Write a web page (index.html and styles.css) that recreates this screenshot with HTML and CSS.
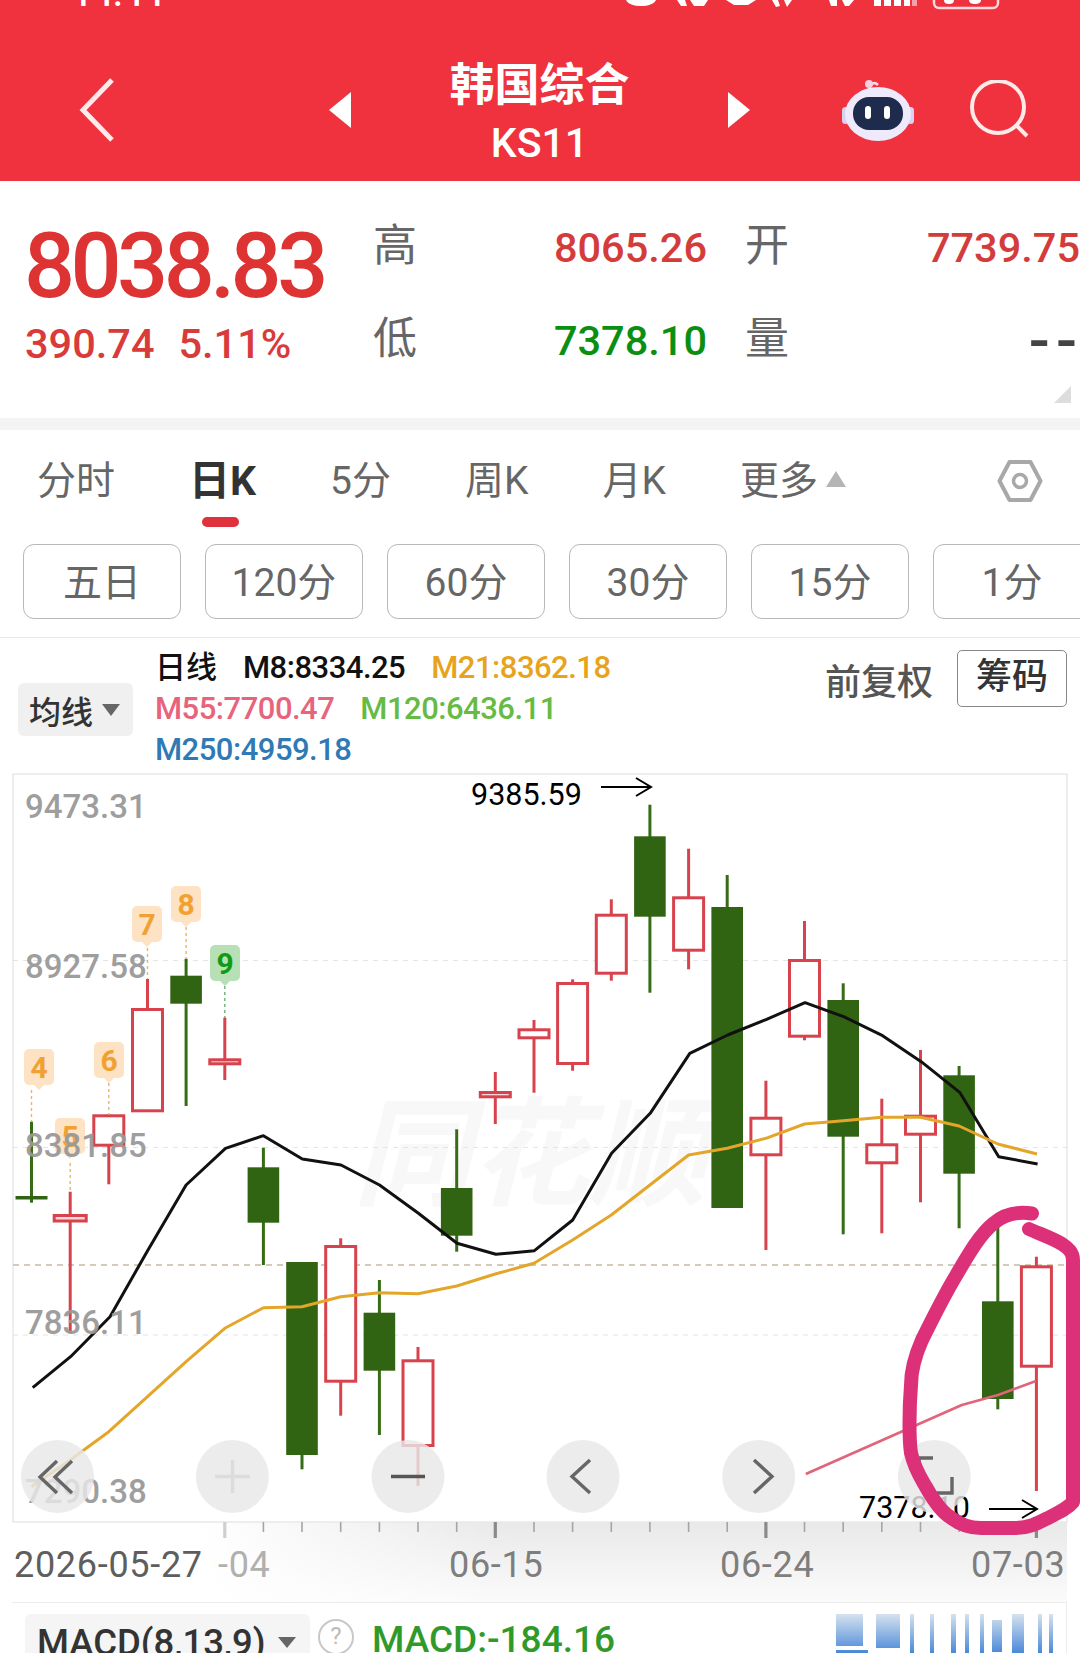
FILE: index.html
```html
<!DOCTYPE html>
<html lang="zh-CN">
<head>
    <meta charset="UTF-8">
    <meta name="viewport" content="width=device-width, initial-scale=1.0">
    <title>韩国综合 KS11</title>
    <link rel="stylesheet" href="styles.css">
</head>
<body>
    <header class="header">
        <div class="status">
            <span class="status-time">14:44</span>
            <svg class="status-icons" width="390" height="10" viewBox="0 0 390 10">
                <path d="M2 0h30c-2 4-8 6-15 6S4 4 2 0z" fill="#fff"/>
                <path d="M53 0h8l2 6h-6zM66 0h18l-4 6h-10z" fill="#fff"/>
                <path d="M102 0h30l-8 5h-14z" fill="#fff"/>
                <path d="M148 0h6l2 6-4 1zM160 0h8l-5 7z" fill="#fff"/>
                <path d="M205 0h8v6h-6zM218 0h12l-5 6h-4z" fill="#fff"/>
                <path d="M250 0h7v6h-7zM260 0h7v6h-7zM270 0h7v6h-7zM280 0h6v6h-6z" fill="#fff"/>
                <path d="M288 0h5v6h-5z" fill="#f5a0a6"/>
                <path d="M310 0v3a5 5 0 0 0 5 5h54a5 5 0 0 0 5-5V0" fill="none" stroke="#ffd9dc" stroke-width="2.5"/>
                <path d="M320 0h10c0 3-2 4-5 4s-5-1-5-4zM345 0h12c0 3-3 4-6 4s-6-1-6-4z" fill="#fff"/>
            </svg>
        </div>
        <div class="nav">
            <svg class="back" width="36" height="64" viewBox="0 0 36 64"><path d="M33 2L4 32l29 30" fill="none" stroke="#ffe9ea" stroke-width="5"/></svg>
            <span class="arrow arrow-left"></span>
            <div class="nav-title">
                <div class="name">韩国综合</div>
                <div class="code">KS11</div>
            </div>
            <span class="arrow arrow-right"></span>
            <svg class="robot" width="72" height="66" viewBox="0 0 72 66">
                <path d="M27 13c1-6 5-9 9-5" fill="none" stroke="#f4d9e6" stroke-width="2.5"/>
                <circle cx="27" cy="7" r="4" fill="#f7cfe0"/>
                <rect x="0" y="30" width="7" height="17" rx="3.5" fill="#d6d3f2"/>
                <rect x="65" y="30" width="7" height="17" rx="3.5" fill="#d6d3f2"/>
                <ellipse cx="36" cy="37" rx="33" ry="27" fill="#eeeafc"/>
                <rect x="11" y="20" width="50" height="33" rx="16" fill="#1f2b4d"/>
                <rect x="23" y="29" width="6" height="13" rx="3" fill="#fff"/>
                <rect x="42" y="29" width="6" height="13" rx="3" fill="#fff"/>
            </svg>
            <svg class="search" width="60" height="60" viewBox="0 0 60 60">
                <circle cx="28" cy="27" r="26" fill="none" stroke="#ffeaea" stroke-width="4"/>
                <path d="M46 45l11 11" stroke="#ffeaea" stroke-width="4"/>
            </svg>
        </div>
    </header>

    <section class="quote">
        <div class="quote-main">
            <div class="price">8038.83</div>
            <div class="change"><span>390.74</span><span>5.11%</span></div>
        </div>
        <div class="q-label">高</div>
        <div class="q-value up">8065.26</div>
        <div class="q-label q-label-wide">开</div>
        <div class="q-value up">7739.75</div>
        <div class="q-label">低</div>
        <div class="q-value down">7378.10</div>
        <div class="q-label q-label-wide">量</div>
        <div class="q-value dash">--</div>
        <span class="corner"></span>
    </section>

    <nav class="tabs">
        <span class="tab">分时</span>
        <span class="tab active">日K</span>
        <span class="tab">5分</span>
        <span class="tab">周K</span>
        <span class="tab">月K</span>
        <span class="tab">更多<i class="more-tri"></i></span>
        <svg class="hex" width="46" height="44" viewBox="0 0 46 44">
            <path d="M12.5 3h21l10 19-10 19h-21L2.500 22z" fill="none" stroke="#a8a8a8" stroke-width="4" stroke-linejoin="round"/>
            <circle cx="23" cy="22" r="6.500" fill="none" stroke="#a8a8a8" stroke-width="3.500"/>
        </svg>
    </nav>

    <div class="periods">
        <button class="period">五日</button>
        <button class="period">120分</button>
        <button class="period">60分</button>
        <button class="period">30分</button>
        <button class="period">15分</button>
        <button class="period">1分</button>
    </div>

    <section class="indicators">
        <div class="ma-pill">均线<i class="pill-tri"></i></div>
        <div class="ma-lines">
            <div class="ma-row"><span class="ma-title">日线</span><span>M8:8334.25</span><span class="m21">M21:8362.18</span></div>
            <div class="ma-row"><span class="m55">M55:7700.47</span><span class="m120">M120:6436.11</span></div>
            <div class="ma-row"><span class="m250">M250:4959.18</span></div>
        </div>
        <div class="ma-right">
            <span class="adjust">前复权</span>
            <span class="chips">筹码</span>
        </div>
    </section>

    <svg class="chart" width="1080" height="832" viewBox="0 770 1080 832">
        <defs>
            <linearGradient id="axisFade" x1="0" y1="0" x2="0" y2="1">
                <stop offset="0" stop-color="#e9e9e9"/>
                <stop offset="1" stop-color="#fbfbfb"/>
            </linearGradient>
            <linearGradient id="axisLeft" x1="0" y1="0" x2="1" y2="0">
                <stop offset="0" stop-color="#fff"/>
                <stop offset="1" stop-color="#fff" stop-opacity="0"/>
            </linearGradient>
            <path id="badge" d="M-10 -20h20a5 5 0 0 1 5 5v26a5 5 0 0 1 -5 5h-5l-5 5-5-5h-5a5 5 0 0 1 -5-5v-26a5 5 0 0 1 5-5z"/>
        </defs>

        <!-- axis strip and frame -->
        <rect x="200" y="1522" width="867" height="80" fill="url(#axisFade)"/>
        <rect x="200" y="1522" width="300" height="80" fill="url(#axisLeft)"/>
        <rect x="13" y="774" width="1054" height="748" class="frame"/>

        <text x="530" y="1196" class="watermark">同花顺</text>

        <path d="M13 960.5H1067M13 1147.5H1067M13 1335H1067" class="grid"/>
        <path d="M13 1265H1067" class="grid-last"/>

        <!-- candles -->
        <path d="M31.5 1121.7V1202.7" class="wick g"/><rect x="15.5" y="1196" width="32" height="3.5" class="solid"/>
        <path d="M70.2 1191.7V1333.3" class="wick r"/><rect x="54.2" y="1215.5" width="32" height="5.5" class="hollow thin"/>
        <path d="M108.8 1114V1184.3" class="wick r"/><rect x="93.8" y="1115.8" width="30" height="29.4" class="hollow"/>
        <path d="M147.5 979V1008" class="wick r"/><rect x="132.5" y="1009.5" width="30" height="101.3" class="hollow"/>
        <path d="M186.1 958.7V1106" class="wick g"/><rect x="170.3" y="975.7" width="31.6" height="28" class="solid"/>
        <path d="M224.8 1017.7V1080" class="wick r"/><rect x="209.8" y="1059.8" width="30" height="4" class="hollow thin"/>
        <path d="M263.4 1147.7V1265" class="wick g"/><rect x="247.6" y="1167.3" width="31.6" height="55.4" class="solid"/>
        <path d="M302 1455V1469.3" class="wick g"/><rect x="286.2" y="1262" width="31.6" height="193" class="solid"/>
        <path d="M340.7 1238.3V1415.7" class="wick r"/><rect x="325.7" y="1246.5" width="30" height="134.7" class="hollow"/>
        <path d="M379.4 1280V1435" class="wick g"/><rect x="363.6" y="1312.7" width="31.6" height="58" class="solid"/>
        <path d="M418 1347V1486" class="wick r"/><rect x="403" y="1360.8" width="30" height="84.7" class="hollow"/>
        <path d="M456.7 1129.3V1251.7" class="wick g"/><rect x="440.9" y="1188" width="31.6" height="47.7" class="solid"/>
        <path d="M495.3 1072V1124" class="wick r"/><rect x="480.3" y="1092.5" width="30" height="4.3" class="hollow thin"/>
        <path d="M534 1020V1092.7" class="wick r"/><rect x="519" y="1029.8" width="30" height="8" class="hollow"/>
        <path d="M572.6 979.3V1070.7" class="wick r"/><rect x="557.6" y="983.5" width="30" height="80" class="hollow"/>
        <path d="M611.3 899.3V980.7" class="wick r"/><rect x="596.3" y="915.2" width="30" height="58" class="hollow"/>
        <path d="M649.9 804.7V992.7" class="wick g"/><rect x="634.1" y="836.3" width="31.6" height="80.4" class="solid"/>
        <path d="M688.6 848.7V969.3" class="wick r"/><rect x="673.6" y="897.8" width="30" height="52.4" class="hollow"/>
        <path d="M727.2 875V907" class="wick g"/><rect x="711.4" y="907" width="31.6" height="301" class="solid"/>
        <path d="M765.9 1080.7V1250" class="wick r"/><rect x="750.9" y="1118.2" width="30" height="36.6" class="hollow"/>
        <path d="M804.5 921V1040.3" class="wick r"/><rect x="789.5" y="960.5" width="30" height="75.7" class="hollow"/>
        <path d="M843.2 983.3V1234.3" class="wick g"/><rect x="827.4" y="1000" width="31.6" height="136.7" class="solid"/>
        <path d="M881.8 1098.7V1233.3" class="wick r"/><rect x="866.8" y="1144.8" width="30" height="18" class="hollow"/>
        <path d="M920.5 1050V1202.3" class="wick r"/><rect x="905.5" y="1116.2" width="30" height="18" class="hollow"/>
        <path d="M959.1 1066V1228.3" class="wick g"/><rect x="943.3" y="1075.3" width="31.6" height="98.4" class="solid"/>
        <path d="M997.8 1225V1409.3" class="wick g"/><rect x="982" y="1301.3" width="31.6" height="97.7" class="solid"/>
        <path d="M1036.4 1256.7V1491" class="wick r"/><rect x="1021.4" y="1266.8" width="30" height="99.4" class="hollow"/>

        <!-- moving averages -->
        <polyline class="line m8" points="32.7,1387.7 70.6,1356.7 110,1316.7 148,1250 186.1,1185 225.5,1148.3 263.4,1135.7 302.3,1159 341,1165 379.5,1185 418.4,1213.3 457,1243.3 495.9,1254.3 534.4,1250.7 572.7,1220 611.6,1153.3 650.2,1113.3 689.8,1053.3 727.7,1035 766.6,1019.3 805,1002.7 843.7,1016.7 882.6,1035.7 921.2,1061.7 960,1092.7 998.7,1156.7 1037.6,1164"/>
        <polyline class="line m21l" points="31.5,1486.7 70.2,1460 108.8,1431.7 147.5,1396.7 186.1,1361.7 224.8,1328.3 263.4,1307.7 302,1306.7 340.7,1296.7 379.4,1292.7 418,1293.7 456.7,1286 495.3,1274 534,1263.3 572.6,1240 611.3,1215 649.9,1185 688.6,1155 727.2,1148.3 765.9,1138.3 804.5,1124 843.2,1120.7 881.8,1117.3 920.5,1117.3 959.1,1126 997.8,1144 1037,1154"/>
        <polyline class="line m55l" points="805.8,1474 961.8,1405 998,1395 1035.9,1381"/>

        <!-- magic nine marks -->
        <path d="M31.5 1090V1122M70.2 1163V1192M108.8 1083V1115M147.5 948V979M186.1 927V959" class="mark-link"/>
        <path d="M224.8 986V1018" class="mark-link mark-link-green"/>
        <g class="mark"><use href="#badge" x="39" y="1069"/><text x="39" y="1078">4</text></g>
        <g class="mark"><use href="#badge" x="70" y="1138"/><text x="70" y="1147">5</text></g>
        <g class="mark"><use href="#badge" x="109" y="1062"/><text x="109" y="1071">6</text></g>
        <g class="mark"><use href="#badge" x="147" y="926"/><text x="147" y="935">7</text></g>
        <g class="mark"><use href="#badge" x="186" y="906"/><text x="186" y="915">8</text></g>
        <g class="mark mark-green"><use href="#badge" x="225" y="965"/><text x="225" y="974">9</text></g>

        <!-- price axis -->
        <text x="25" y="818" class="axis">9473.31</text>
        <text x="25" y="978" class="axis">8927.58</text>
        <text x="25" y="1157" class="axis">8381.85</text>
        <text x="25" y="1334" class="axis">7836.11</text>
        <text x="25" y="1503" class="axis">7290.38</text>

        <!-- high / low labels -->
        <text x="471" y="805" class="extreme">9385.59</text>
        <path d="M601 787H650M636 778l15 9-15 9" class="extreme-arrow"/>
        <text x="859" y="1518" class="extreme">7378.10</text>
        <path d="M989 1509H1037M1022 1500l15 9-15 9" class="extreme-arrow"/>

        <!-- date axis -->
        <path d="M263.4 1522v10M302 1522v10M340.7 1522v10M379.4 1522v10M418 1522v10M456.7 1522v10M534 1522v10M572.6 1522v10M611.3 1522v10M649.9 1522v10M688.6 1522v10M727.2 1522v10M804.5 1522v10M843.2 1522v10M881.8 1522v10M920.5 1522v10M959.1 1522v10" class="tick"/>
        <path d="M224.8 1522v16" class="tick-big tick-faint"/>
        <path d="M495.3 1522v16M765.9 1522v16M1036.4 1522v16" class="tick-big"/>
        <text x="14" y="1577" class="date date-first">2026-05-27</text>
        <text x="218" y="1577" class="date date-faint">-04</text>
        <text x="449" y="1577" class="date">06-15</text>
        <text x="720" y="1577" class="date">06-24</text>
        <text x="971" y="1577" class="date">07-03</text>

        <!-- chart controls -->
        <circle cx="57.5" cy="1476.5" r="36.5" class="ctrl"/>
        <circle cx="232.4" cy="1476.5" r="36.5" class="ctrl"/>
        <circle cx="408" cy="1476.5" r="36.5" class="ctrl"/>
        <circle cx="583" cy="1476.5" r="36.5" class="ctrl"/>
        <circle cx="758.7" cy="1476.5" r="36.5" class="ctrl"/>
        <circle cx="934.3" cy="1476.5" r="36.5" class="ctrl"/>
        <path d="M57 1461L40 1477l17 16M72 1461L55 1477l17 16" class="ctrl-icon"/>
        <path d="M215 1476.5h35M232.5 1460v33" class="ctrl-icon ctrl-icon-off"/>
        <path d="M391 1476.5h34" class="ctrl-icon ctrl-icon-dark"/>
        <path d="M590 1460l-18 16.5 18 16.5" class="ctrl-icon"/>
        <path d="M754 1460l18 16.5-18 16.5" class="ctrl-icon"/>
        <path d="M919 1475v-17h14M952 1477v16h-15" class="ctrl-icon"/>

        <!-- hand-drawn circle on top of the screenshot -->
        <path class="scribble" d="M1032 1213.5C1022 1212 1007 1212 994 1223C980 1234 968 1255 957 1274C943 1297 932 1320 922 1340C914 1358 911 1370 911 1385C909 1410 909 1440 911 1453C915 1470 921 1478 926 1487C935 1503 942 1512 950 1517C960 1525 970 1528 981 1528L1015 1528C1030 1528 1040 1522 1050 1517C1060 1512 1068 1508 1073 1502L1073 1260C1073 1252 1068 1248 1062 1244C1052 1238 1040 1234 1029 1229"/>
    </svg>

    <section class="macd">
        <div class="macd-pill">MACD(8,13,9)<i class="macd-tri"></i></div>
        <span class="help">?</span>
        <span class="macd-value">MACD:-184.16</span>
        <svg class="stamp" width="230" height="42" viewBox="0 0 230 42">
            <defs>
                <linearGradient id="stampBlue" x1="0" y1="0" x2="0" y2="1">
                    <stop offset="0" stop-color="#d6e2ef"/>
                    <stop offset="1" stop-color="#3f82d6"/>
                </linearGradient>
            </defs>
            <path d="M0 0h27v32H0zM0 36h32v6H0zM40 0h24v34H40zM74 0h4v42h-4zM94 0h4v42h-4zM115 0h5v42h-5zM129 0h4v42h-4zM144 0h4v42h-4zM156 6h10v32h-10zM176 0h12v42h-12zM202 0h4v42h-4zM213 0h4v42h-4z" fill="url(#stampBlue)"/>
        </svg>
    </section>
</body>
</html>
```

FILE: styles.css
```css
* {
    box-sizing: border-box;
}
html, body {
    margin: 0;
    height: 1653px;
    overflow: hidden;
    background-color: #fff;
}
body {
    width: 1080px;
    font-family: Roboto, "Noto Sans CJK SC", sans-serif;
    color: #333;
}
i {
    display: inline-block;
}

/* red header */
.header {
    height: 181px;
    background-color: #ef323d;
    color: #fff;
}
.status {
    display: flex;
    height: 10px;
    overflow: hidden;
    padding-left: 72px;
}
.status-time {
    font-size: 36px;
    font-weight: 500;
    line-height: 10px;
    margin-top: -11px;
}
.status-icons {
    margin-left: auto;
    margin-right: 66px;
}
.nav {
    display: flex;
    align-items: center;
    height: 171px;
    padding-top: 29px;
    padding-left: 79px;
}
.arrow {
    width: 0;
    height: 0;
    border-top: 18px solid transparent;
    border-bottom: 18px solid transparent;
}
.arrow-left {
    margin-left: 214px;
    border-right: 22px solid #fff;
}
.arrow-right {
    border-left: 22px solid #fff;
}
.nav-title {
    width: 377px;
    text-align: center;
}
.name {
    font-size: 45px;
    font-weight: 700;
    line-height: 50px;
    margin-top: 6px;
}
.code {
    font-size: 41px;
    font-weight: 500;
    line-height: 46px;
    margin-top: 9px;
}
.robot {
    margin-left: 92px;
}
.search {
    margin-left: 56px;
}

/* quote block */
.quote {
    position: relative;
    display: grid;
    grid-template-columns: 373px 44px 290px 82px 291px;
    grid-template-rows: 93px 93px;
    height: 237px;
    padding-top: 19px;
}
.quote-main {
    grid-row: 1 / 3;
    padding-left: 24px;
}
.price {
    font-size: 90px;
    font-weight: 500;
    letter-spacing: -4.6px;
    line-height: 100px;
    margin-top: 17px;
    color: #dd3333;
}
.change {
    display: flex;
    gap: 24px;
    font-size: 41.5px;
    font-weight: 500;
    line-height: 50px;
    margin-top: 2px;
    padding-left: 1px;
    color: #d93a3a;
}
.q-label {
    font-size: 44px;
    line-height: 93px;
    color: #666;
}
.q-label-wide {
    text-align: right;
}
.q-value {
    font-size: 41.5px;
    font-weight: 500;
    line-height: 95px;
    text-align: right;
}
.up {
    color: #d43c3c;
}
.down {
    color: #0b8f12;
}
.dash {
    color: #444;
    font-size: 62px;
    letter-spacing: 6px;
    margin-right: -3px;
}
.corner {
    position: absolute;
    right: 9px;
    bottom: 15px;
    width: 0;
    height: 0;
    border-left: 17px solid transparent;
    border-bottom: 17px solid #ddd;
}

/* period tabs */
.tabs {
    display: flex;
    align-items: center;
    gap: 74px;
    height: 114px;
    padding: 0 37px 0 37px;
    border-top: 12px solid #f4f4f4;
}
.tab {
    position: relative;
    font-size: 39px;
    line-height: 46px;
    color: #666;
    white-space: nowrap;
}
.tab.active {
    font-size: 41px;
    font-weight: 700;
    color: #333;
}
.tab.active::after {
    content: "";
    position: absolute;
    left: 13px;
    width: 37px;
    top: 59px;
    height: 10px;
    border-radius: 5px;
    background-color: #e0323c;
}
.more-tri {
    width: 0;
    height: 0;
    margin-left: 8px;
    vertical-align: 7px;
    border-left: 10px solid transparent;
    border-right: 10px solid transparent;
    border-bottom: 16px solid #b5b5b5;
}
.hex {
    margin-left: auto;
}

.periods {
    display: flex;
    gap: 24px;
    height: 106px;
    padding: 12px 0 0 23px;
    overflow: hidden;
    border-bottom: 1px solid #e8e8e8;
}
.period {
    flex: none;
    width: 158px;
    height: 75px;
    font-family: inherit;
    font-size: 39px;
    color: #666;
    background-color: #fff;
    border: 1px solid #b8b8b8;
    border-radius: 11px;
    padding: 0 0 5px;
}

/* moving average legend */
.indicators {
    display: flex;
    align-items: flex-start;
    height: 132px;
    padding-right: 13px;
}
.ma-pill {
    display: flex;
    align-items: center;
    margin: 45px 0 0 18px;
    padding-left: 11px;
    width: 115px;
    height: 53px;
    font-size: 32px;
    font-weight: 500;
    background-color: #f0f0f0;
    border-radius: 6px;
}
.pill-tri {
    width: 0;
    height: 0;
    margin-left: 9px;
    border-left: 9px solid transparent;
    border-right: 9px solid transparent;
    border-top: 12px solid #666;
}
.ma-lines {
    margin: 9px 0 0 22px;
}
.ma-row {
    display: flex;
    gap: 26px;
    height: 41px;
    font-size: 31px;
    font-weight: 500;
    line-height: 41px;
    letter-spacing: -0.5px;
    color: #111;
}
.ma-title {
    letter-spacing: 0;
}
.m21 {
    color: #e8a31c;
}
.m55 {
    color: #e8647c;
}
.m120 {
    color: #66bb44;
}
.m250 {
    color: #2f7ab5;
}
.ma-right {
    display: flex;
    align-items: center;
    gap: 24px;
    margin: 12px 0 0 auto;
}
.adjust {
    font-size: 36px;
    font-weight: 500;
    color: #555;
}
.chips {
    display: block;
    width: 110px;
    height: 57px;
    font-size: 36px;
    font-weight: 500;
    line-height: 53px;
    text-align: center;
    color: #333;
    border: 1px solid #888;
    border-radius: 5px;
}

/* chart */
.chart {
    display: block;
}
.frame {
    fill: none;
    stroke: #e9e9e9;
    stroke-width: 1.5;
}
.watermark {
    font-family: "Noto Sans CJK SC", sans-serif;
    font-size: 118px;
    font-weight: 700;
    font-style: italic;
    text-anchor: middle;
    fill: #f8f8f8;
}
.grid {
    stroke: #e4e4e4;
    stroke-width: 1.2;
    stroke-dasharray: 5 5;
}
.grid-last {
    stroke: #c9b9a2;
    stroke-width: 1.5;
    stroke-dasharray: 6 5;
}
.wick {
    fill: none;
    stroke-width: 3;
}
.g {
    stroke: #376c16;
}
.r {
    stroke: #d8424c;
}
.solid {
    fill: #316412;
}
.hollow {
    fill: #fff;
    stroke: #d8424c;
    stroke-width: 3;
}
.hollow.thin {
    fill: #f8d8da;
}
.line {
    fill: none;
    stroke-linejoin: round;
}
.m8 {
    stroke: #111;
    stroke-width: 3;
}
.m21l {
    stroke: #e3a62a;
    stroke-width: 3;
}
.m55l {
    stroke: #e0647a;
    stroke-width: 2.6;
}
.mark-link {
    stroke: #e8b568;
    stroke-width: 1.4;
    stroke-dasharray: 3 3;
}
.mark-link-green {
    stroke: #6fb07a;
}
.mark use {
    fill: #fde2c3;
}
.mark text {
    font-size: 30px;
    font-weight: 700;
    text-anchor: middle;
    fill: #f0a133;
}
.mark-green use {
    fill: #b8e0b6;
}
.mark-green text {
    fill: #0f9b14;
}
.axis {
    font-size: 33px;
    font-weight: 500;
    fill: #999;
    opacity: 0.95;
}
.extreme {
    font-size: 30.5px;
    fill: #000;
}
.extreme-arrow {
    fill: none;
    stroke: #000;
    stroke-width: 2;
}
.tick {
    stroke: #a5a5a5;
    stroke-width: 1.6;
}
.tick-big {
    stroke: #8a8a8a;
    stroke-width: 3.2;
}
.tick-faint {
    stroke: #cfcfcf;
}
.date {
    font-size: 36px;
    letter-spacing: 0.7px;
    fill: #7e7e7e;
}
.date-first {
    fill: #5e5e5e;
}
.date-faint {
    fill: #b0b0b0;
}
.ctrl {
    fill: #e8e8e8;
    fill-opacity: 0.82;
}
.ctrl-icon {
    fill: none;
    stroke: #666;
    stroke-width: 3.4;
}
.ctrl-icon-off {
    stroke: #dcdcdc;
}
.ctrl-icon-dark {
    stroke: #555;
}
.scribble {
    fill: none;
    stroke: #dc3079;
    stroke-width: 14;
    stroke-linecap: round;
    stroke-linejoin: round;
}

/* MACD row */
.macd {
    display: flex;
    align-items: flex-start;
    height: 51px;
    margin-left: 12px;
    padding: 11px 0 0 13px;
    border-top: 1.5px solid #ececec;
    border-right: 1.5px solid #ececec;
    width: 1055px;
}
.macd-pill {
    display: flex;
    align-items: center;
    flex: none;
    width: 285px;
    height: 48px;
    padding: 8px 0 0 12px;
    font-size: 36.5px;
    font-weight: 500;
    color: #333;
    background-color: #f5f5f5;
    border-radius: 6px 6px 0 0;
    white-space: nowrap;
}
.macd-tri {
    width: 0;
    height: 0;
    margin-left: 12px;
    border-left: 9px solid transparent;
    border-right: 9px solid transparent;
    border-top: 11px solid #666;
}
.help {
    flex: none;
    width: 36px;
    height: 36px;
    margin: 5px 0 0 8px;
    font-size: 24px;
    line-height: 31px;
    text-align: center;
    color: #bbb;
    border: 2.5px solid #c8c8c8;
    border-radius: 50%;
}
.macd-value {
    margin-left: 18px;
    font-size: 37px;
    font-weight: 500;
    line-height: 52px;
    color: #2f9a2a;
    white-space: nowrap;
}
.stamp {
    margin-left: auto;
    flex: none;
}
```
